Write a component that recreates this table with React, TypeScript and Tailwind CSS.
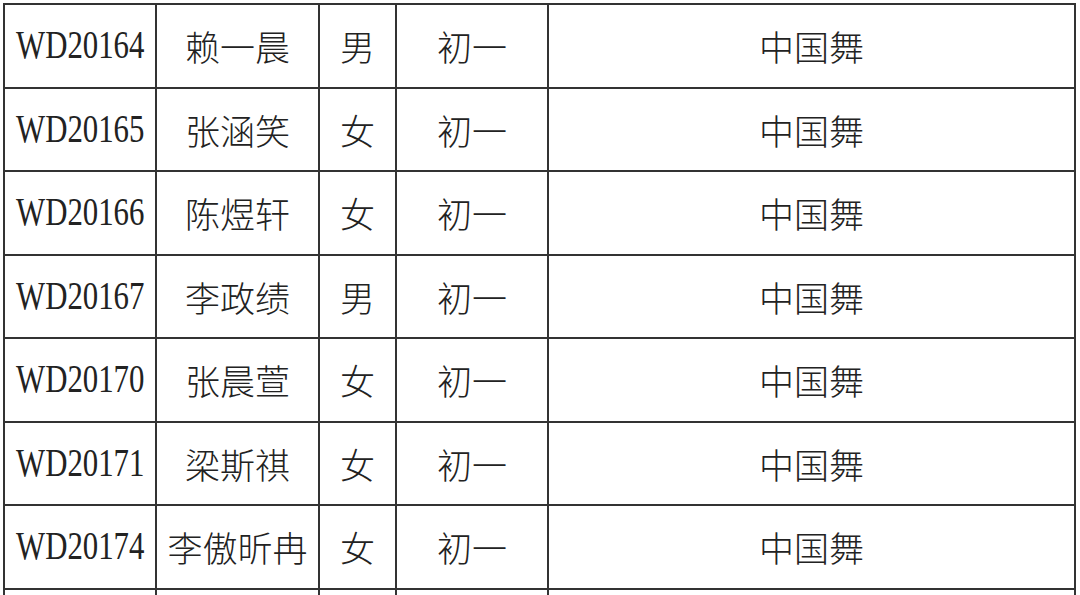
const rows = [
  { id: 'WD20164', name: '赖一晨', sex: '男', grade: '初一', item: '中国舞' },
  { id: 'WD20165', name: '张涵笑', sex: '女', grade: '初一', item: '中国舞' },
  { id: 'WD20166', name: '陈煜轩', sex: '女', grade: '初一', item: '中国舞' },
  { id: 'WD20167', name: '李政绩', sex: '男', grade: '初一', item: '中国舞' },
  { id: 'WD20170', name: '张晨萱', sex: '女', grade: '初一', item: '中国舞' },
  { id: 'WD20171', name: '梁斯祺', sex: '女', grade: '初一', item: '中国舞' },
  { id: 'WD20174', name: '李傲昕冉', sex: '女', grade: '初一', item: '中国舞' },
  { id: '', name: '', sex: '', grade: '', item: '' },
];

const cjk = "font-['Noto_Sans_CJK_SC',sans-serif] font-light text-[35px]";
const cell = 'border-2 border-[#333] text-center align-middle p-0 leading-none text-[#222]';

export default function App() {
  return (
    <div className="w-[1080px] h-[595px] overflow-hidden bg-white pl-[3px] pt-[3px]">
      <table className="table-fixed border-collapse w-[1071px]">
        <colgroup>
          <col className="w-[152px]" />
          <col className="w-[163px]" />
          <col className="w-[77px]" />
          <col className="w-[152px]" />
          <col className="w-[527px]" />
        </colgroup>
        <tbody>
          {rows.map((r, i) => (
            <tr key={i} className="h-[83.5px]">
              <td className={cell}>
                <div className="flex justify-center">
                  <span className="shrink-0 whitespace-nowrap -translate-y-px font-['Liberation_Serif',serif] text-[39px] scale-x-[0.79]">
                    {r.id}
                  </span>
                </div>
              </td>
              <td className={`${cell} ${cjk} whitespace-nowrap`}>{r.name}</td>
              <td className={`${cell} ${cjk}`}>{r.sex}</td>
              <td className={`${cell} ${cjk}`}>{r.grade}</td>
              <td className={`${cell} ${cjk}`}>{r.item}</td>
            </tr>
          ))}
        </tbody>
      </table>
    </div>
  );
}
